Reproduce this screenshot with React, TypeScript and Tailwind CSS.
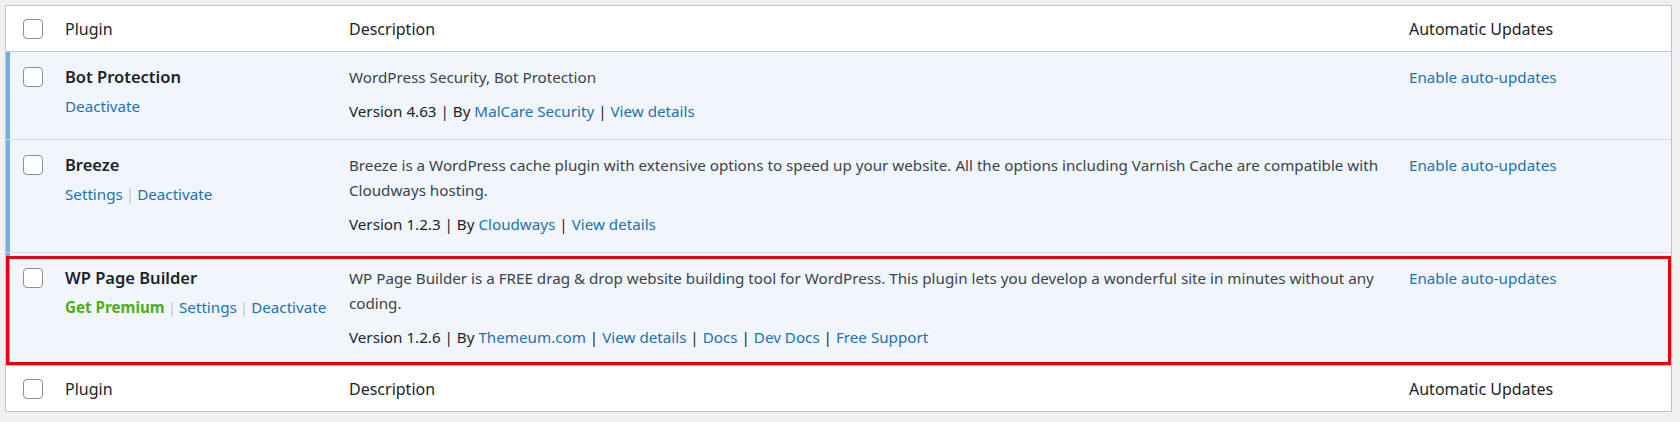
const cols = 'grid grid-cols-[49px_284px_1060px_1fr]';

function Checkbox() {
    return <div className="h-[20px] w-[20px] rounded-[4px] border border-[#8c8f94] bg-white" />;
}

function Link({ children }: { children: React.ReactNode }) {
    return <a className="text-[#2271b1] cursor-pointer">{children}</a>;
}

function HeadRow({ top }: { top?: boolean }) {
    return (
        <div className={`${cols} h-[46px] items-center bg-white text-[#1d2327] ${top ? 'border-b' : 'border-t'} border-[#c3c4c7]`}>
            <div className="pl-[17px]">
                <Checkbox />
            </div>
            <div className="pl-[10px] text-[16px]">Plugin</div>
            <div className="pl-[10px] text-[16px]">Description</div>
            <div className="pl-[10px] text-[16px]">Automatic Updates</div>
        </div>
    );
}

type Row = {
    name: string;
    actions: { label: string; premium?: boolean }[];
    lines: string[];
    version: string;
    links: string[];
    highlight?: boolean;
    last?: boolean;
};

const rows: Row[] = [
    {
        name: 'Bot Protection',
        actions: [{ label: 'Deactivate' }],
        lines: ['WordPress Security, Bot Protection'],
        version: '4.63',
        links: ['MalCare Security', 'View details'],
    },
    {
        name: 'Breeze',
        actions: [{ label: 'Settings' }, { label: 'Deactivate' }],
        lines: [
            'Breeze is a WordPress cache plugin with extensive options to speed up your website. All the options including Varnish Cache are compatible with',
            'Cloudways hosting.',
        ],
        version: '1.2.3',
        links: ['Cloudways', 'View details'],
    },
    {
        name: 'WP Page Builder',
        actions: [{ label: 'Get Premium', premium: true }, { label: 'Settings' }, { label: 'Deactivate' }],
        lines: [
            'WP Page Builder is a FREE drag & drop website building tool for WordPress. This plugin lets you develop a wonderful site in minutes without any',
            'coding.',
        ],
        version: '1.2.6',
        links: ['Themeum.com', 'View details', 'Docs', 'Dev Docs', 'Free Support'],
        highlight: true,
        last: true,
    },
];

function PluginRow({ row }: { row: Row }) {
    return (
        <div className={`${cols} relative bg-[#f0f6fc] ${row.last ? '' : 'border-b border-[#d9dfe5]'}`}>
            <div className="border-l-4 border-[#72aee6] pl-[13px] pt-[15px]">
                <Checkbox />
            </div>
            <div className="pl-[10px] pr-[4px] pt-[13px] pb-[15px]">
                <div className="text-[16.5px] font-semibold leading-[24px] text-[#1d2327]">{row.name}</div>
                <div className="mt-[5px] whitespace-nowrap leading-[24px]">
                    {row.actions.map((a, i) => (
                        <span key={a.label}>
                            {i > 0 && <span className="mx-[3px] text-[#c3c4c7]">|</span>}
                            {a.premium ? (
                                <a className="font-bold text-[#4caf1a]">{a.label}</a>
                            ) : (
                                <Link>{a.label}</Link>
                            )}
                        </span>
                    ))}
                </div>
            </div>
            <div className="pl-[10px] pr-[10px] pt-[13px] pb-[15px]">
                <p className="leading-[25px] text-[#3c434a]">
                    {row.lines.map((l, i) => (
                        <span key={i} className="block whitespace-nowrap">
                            {l}
                        </span>
                    ))}
                </p>
                <p className="mt-[9px] leading-[25px] text-[#1d2327]">
                    Version {row.version} | By <Link>{row.links[0]}</Link>
                    {row.links.slice(1).map((l) => (
                        <span key={l}>
                            {' | '}
                            <Link>{l}</Link>
                        </span>
                    ))}
                </p>
            </div>
            <div className="pl-[10px] pt-[13px] leading-[24px]">
                <Link>Enable auto-updates</Link>
            </div>
            {row.highlight && (
                <div className="pointer-events-none absolute left-0 right-0 top-[3px] bottom-0 border-[3px] border-[#e6000b]" />
            )}
        </div>
    );
}

export default function App() {
    return (
        <div className="min-h-screen bg-[#f0f0f1] pl-[5px] pt-[5px] font-['Noto_Sans',sans-serif] text-[15.2px]">
            <div className="w-[1667px] border border-[#c3c4c7] bg-white">
                <HeadRow top />
                {rows.map((r) => (
                    <PluginRow key={r.name} row={r} />
                ))}
                <HeadRow />
            </div>
        </div>
    );
}
